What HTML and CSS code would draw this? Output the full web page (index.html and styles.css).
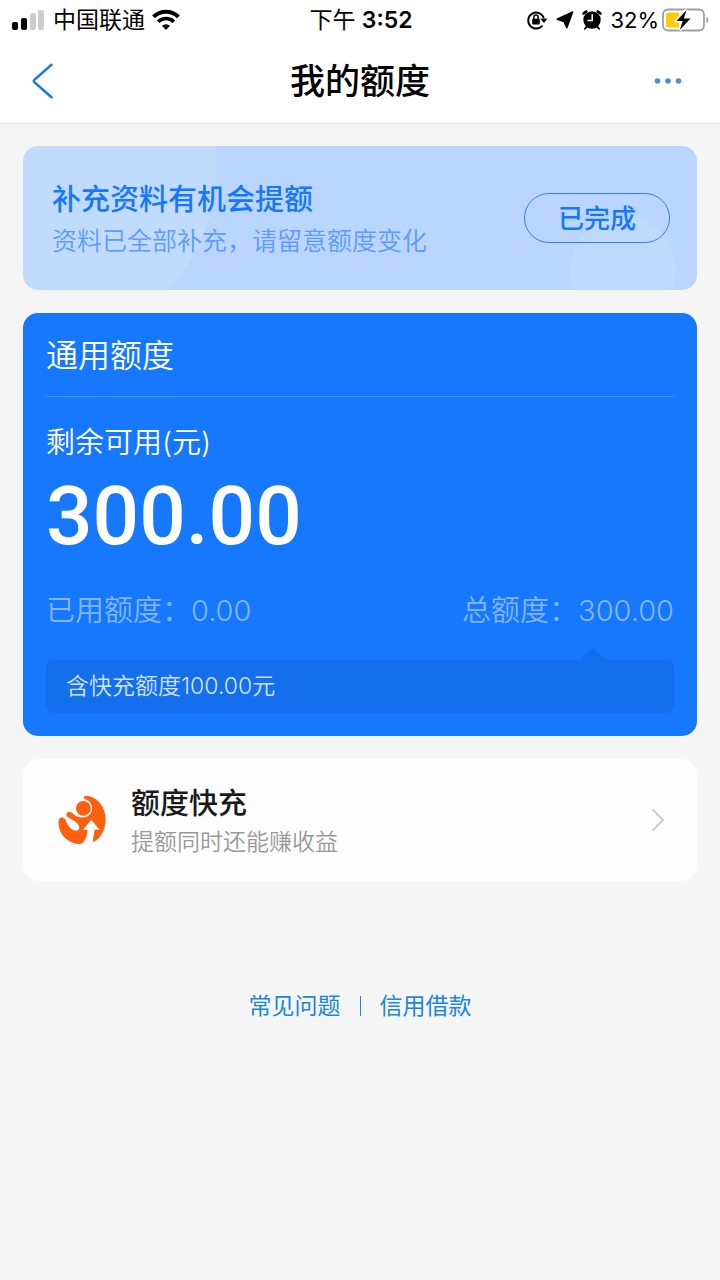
FILE: index.html
```
<!DOCTYPE html>
<html lang="zh-CN">
<head>
    <meta charset="UTF-8">
    <meta name="viewport" content="width=device-width, initial-scale=1.0">
    <title>我的额度</title>
    <link rel="stylesheet" href="styles.css">
</head>
<body>
    <!-- Status bar -->
    <div class="status-bar">
        <div class="status-left">
            <svg class="signal" width="34" height="22" viewBox="0 0 34 22">
                <rect x="0" y="13" width="6" height="8" rx="2" fill="#000"/>
                <rect x="9" y="9" width="6" height="12" rx="2" fill="#000"/>
                <rect x="18" y="4" width="6" height="17" rx="2" fill="#ccc"/>
                <rect x="26" y="1" width="6" height="20" rx="2" fill="#ccc"/>
            </svg>
            <span>中国联通</span>
            <svg class="wifi" width="28" height="22" viewBox="0 0 28 22">
                <path d="M1.500 7.800a17.700 17.700 0 0 1 25 0" fill="none" stroke="#000" stroke-width="4"/>
                <path d="M6.200 12.800a11 11 0 0 1 15.600 0" fill="none" stroke="#000" stroke-width="3.600"/>
                <path d="M10 16.800a5.800 5.800 0 0 1 8 0L14 21z" fill="#000"/>
            </svg>
        </div>
        <div class="status-time">下午 <b>3:52</b></div>
        <div class="status-right">
            <svg width="22" height="22" viewBox="0 0 22 22">
                <path d="M16.500 16.500A8 8 0 1 1 17.800 9" fill="none" stroke="#000" stroke-width="1.900"/>
                <path d="M14.200 9.500h7.200L18 14z" fill="#000"/>
                <rect x="6.200" y="9.800" width="7.600" height="5.600" rx="1" fill="#000"/>
                <path d="M7.900 10V8.200a2.100 2.100 0 0 1 4.200 0V10" fill="none" stroke="#000" stroke-width="1.500"/>
            </svg>
            <svg width="18" height="18" viewBox="0 0 18 18">
                <path d="M16.600 1L10.800 16.600 8 10.400 1.200 8.200z" fill="#000" stroke="#000" stroke-width="1.600" stroke-linejoin="round"/>
            </svg>
            <svg width="20" height="22" viewBox="0 0 20 22">
                <circle cx="10" cy="11" r="8.700" fill="#000"/>
                <path d="M1.600 4.600L4.200 2.400M18.400 4.600L15.800 2.400" stroke="#000" stroke-width="2.600" stroke-linecap="round"/>
                <path d="M4.600 18L2.800 19.800M15.400 18l1.800 1.800" stroke="#000" stroke-width="1.800" stroke-linecap="round"/>
                <path d="M10.200 5.200v6.200H5.400" fill="none" stroke="#fff" stroke-width="1.500"/>
            </svg>
            <span class="battery-text">32%</span>
            <svg class="battery" width="48" height="24" viewBox="0 0 48 24">
                <rect x="1" y="1.500" width="41" height="21" rx="5" fill="none" stroke="#a0a0a0" stroke-width="1.800"/>
                <path d="M44.500 8.500c2.400 1 2.400 6 0 7z" fill="#a0a0a0"/>
                <path d="M7 4.500h10v15H7a3 3 0 0 1-3-3v-9a3 3 0 0 1 3-3z" fill="#ffcc00"/>
                <path d="M24.500 2L14.500 13h6.200L17.800 22 28.500 10.400h-6.600z" fill="#000" stroke="#fff" stroke-width="3" paint-order="stroke"/>
            </svg>
        </div>
    </div>

    <!-- Navigation -->
    <header class="nav">
        <button type="button" class="nav-btn" aria-label="返回">
            <svg width="22" height="36" viewBox="0 0 22 36">
                <path d="M19.500 1.800L2.600 16.600q-1.500 1.400 0 2.800L19.500 34.200" fill="none" stroke="#1f76ec" stroke-width="2.600" stroke-linecap="round"/>
            </svg>
        </button>
        <h1>我的额度</h1>
        <button type="button" class="nav-btn nav-more" aria-label="更多">
            <svg width="28" height="6" viewBox="0 0 28 6">
                <circle cx="3.500" cy="3" r="2.800" fill="#4a8fdc"/>
                <circle cx="14" cy="3" r="2.800" fill="#4a8fdc"/>
                <circle cx="24.500" cy="3" r="2.800" fill="#4a8fdc"/>
            </svg>
        </button>
    </header>

    <main class="content">
        <section class="banner">
            <div class="banner-text">
                <h2>补充资料有机会提额</h2>
                <p>资料已全部补充，请留意额度变化</p>
            </div>
            <button type="button" class="done-btn">已完成</button>
        </section>

        <section class="quota">
            <h2>通用额度</h2>
            <p class="quota-label">剩余可用(元)</p>
            <p class="quota-amount">300.00</p>
            <div class="quota-row">
                <span>已用额度：0.00</span>
                <span>总额度：300.00</span>
            </div>
            <p class="quota-note">含快充额度100.00元</p>
        </section>

        <a class="boost" href="#">
            <svg class="boost-icon" width="48" height="50" viewBox="0 0 48 50">
                <path d="M28 .8C39 1.500 47.600 12 47.600 24C47.600 34 43.500 43 35.500 47Q34.600 47 34.900 45.500L36.500 34.700H41.300L33.300 24.700L25 34.700H29.500Q29.500 42 24.700 48Q23 49.400 20 49C8 47.500 .8 38 .5 28C.5 23.500 2.500 22 5 22.500Q7 23 8 26C10 32 14.500 36 19 35.700C21.600 35 21.800 32.500 20.500 30C18 25.500 12 24.500 8.600 21C7.600 18 9.500 16.500 12 17C15.500 17.600 17 22.500 24.500 22.600C30.500 22.600 34.500 17.500 34 12.500C33.600 7 30 5 26.500 4Q24.500 1 28 .8z" fill="#ff6010"/>
                <circle cx="25.300" cy="13.300" r="7.400" fill="#ff6010"/>
            </svg>
            <div class="boost-text">
                <h3>额度快充</h3>
                <p>提额同时还能赚收益</p>
            </div>
            <svg width="14" height="24" viewBox="0 0 14 24">
                <path d="M1.500 1.500L12 12 1.500 22.500" fill="none" stroke="#ccc" stroke-width="2"/>
            </svg>
        </a>

        <footer class="links">
            <a href="#">常见问题</a>
            <span class="divider"></span>
            <a href="#">信用借款</a>
        </footer>
    </main>
</body>
</html>
```
FILE: styles.css
```
* {
    box-sizing: border-box;
}

body {
    margin: 0;
    min-height: 100vh;
    background-color: #f5f5f5;
    font-family: Inter, 'Noto Sans CJK SC', sans-serif;
    color: #000;
}

h1, h2, h3, p {
    margin: 0;
}

a {
    text-decoration: none;
}

button {
    font-family: inherit;
    background: none;
    cursor: pointer;
}

svg {
    display: block;
    flex-shrink: 0;
}

/* Status bar */
.status-bar {
    display: grid;
    grid-template-columns: 1fr auto 1fr;
    align-items: center;
    height: 39px;
    padding: 0 10px 0 12px;
    background-color: #fff;
    font-size: 23px;
    line-height: 32px;
}

.status-left,
.status-right {
    display: flex;
    align-items: center;
}

.status-left {
    gap: 7px;
}

.status-right {
    justify-content: flex-end;
    gap: 8px;
}

.status-time b {
    font-weight: 600;
}

.battery-text {
    font-size: 22px;
}

.battery {
    margin-left: -5px;
}

/* Navigation */
.nav {
    display: flex;
    justify-content: space-between;
    align-items: center;
    height: 85px;
    padding: 0 32px;
    background-color: #fff;
    border-bottom: 1px solid #e2e2e2;
}

.nav h1 {
    font-size: 35px;
    font-weight: 500;
    line-height: 48px;
}

.nav-btn {
    display: flex;
    align-items: center;
    width: 56px;
    height: 48px;
    padding: 0;
    border: none;
}

.nav-more {
    justify-content: flex-end;
    padding-right: 6px;
}

.content {
    display: flex;
    flex-direction: column;
    gap: 23px;
    padding: 22px 23px;
}

/* Banner */
.banner {
    display: flex;
    justify-content: space-between;
    align-items: center;
    height: 144px;
    padding: 0 27px 0 29px;
    border-radius: 15px;
    background-color: #bad6ff;
    background-image:
        radial-gradient(circle at 600px 123px, #c0daff 52px, transparent 53px),
        radial-gradient(circle at 9px 19px, #c1dbff 184px, transparent 185px);
    color: #1677ff;
}

.banner-text {
    padding-top: 4px;
}

.banner h2 {
    font-size: 29px;
    font-weight: 500;
    line-height: 42px;
}

.banner p {
    color: #5c9bff;
    font-size: 25px;
    font-weight: 350;
    line-height: 40px;
}

.done-btn {
    width: 146px;
    height: 50px;
    padding: 0 0 3px;
    border: 1px solid #2e80f0;
    border-radius: 25px;
    color: #1677ff;
    font-size: 26px;
    font-weight: 500;
}

/* Quota card */
.quota {
    padding: 0 23px 23px;
    border-radius: 15px;
    background-color: #1677ff;
    color: #fff;
}

.quota h2 {
    padding-top: 3px;
    border-bottom: 1px solid #4592ff;
    font-size: 32px;
    font-weight: 350;
    line-height: 80px;
}

.quota-label {
    margin-top: 25px;
    font-size: 29px;
    font-weight: 350;
    line-height: 42px;
}

.quota-amount {
    font-family: Roboto, sans-serif;
    font-size: 82px;
    font-weight: 500;
    line-height: 104px;
}

.quota-row {
    display: flex;
    justify-content: space-between;
    margin-top: 23px;
    color: #84b7ff;
    font-size: 29px;
    font-weight: 350;
    line-height: 40px;
}

.quota-note {
    position: relative;
    margin-top: 29px;
    padding: 0 20px;
    border-radius: 8px;
    background-color: #156eeb;
    color: #d0e4ff;
    font-size: 23px;
    font-weight: 350;
    line-height: 53px;
}

.quota-note::before {
    content: "";
    position: absolute;
    top: -12px;
    right: 68px;
    border: 13px solid transparent;
    border-top: none;
    border-bottom: 12px solid #156eeb;
}

/* Quick boost entry */
.boost {
    display: flex;
    align-items: center;
    height: 122px;
    padding: 0 32px 0 35px;
    border-radius: 15px;
    background-color: #fdfdfd;
}

.boost-text {
    flex: 1;
    margin-left: 25px;
    padding-top: 5px;
}

.boost h3 {
    color: #1a1a1a;
    font-size: 29px;
    font-weight: 500;
    line-height: 38px;
}

.boost p {
    color: #999;
    font-size: 23px;
    font-weight: 350;
    line-height: 38px;
}

/* Bottom links */
.links {
    display: flex;
    justify-content: center;
    align-items: center;
    gap: 19px;
    margin-top: 85px;
    font-size: 23px;
    line-height: 34px;
}

.links a {
    color: #1a86dc;
}

.divider {
    width: 1px;
    height: 20px;
    background-color: #1a86dc;
}
```
